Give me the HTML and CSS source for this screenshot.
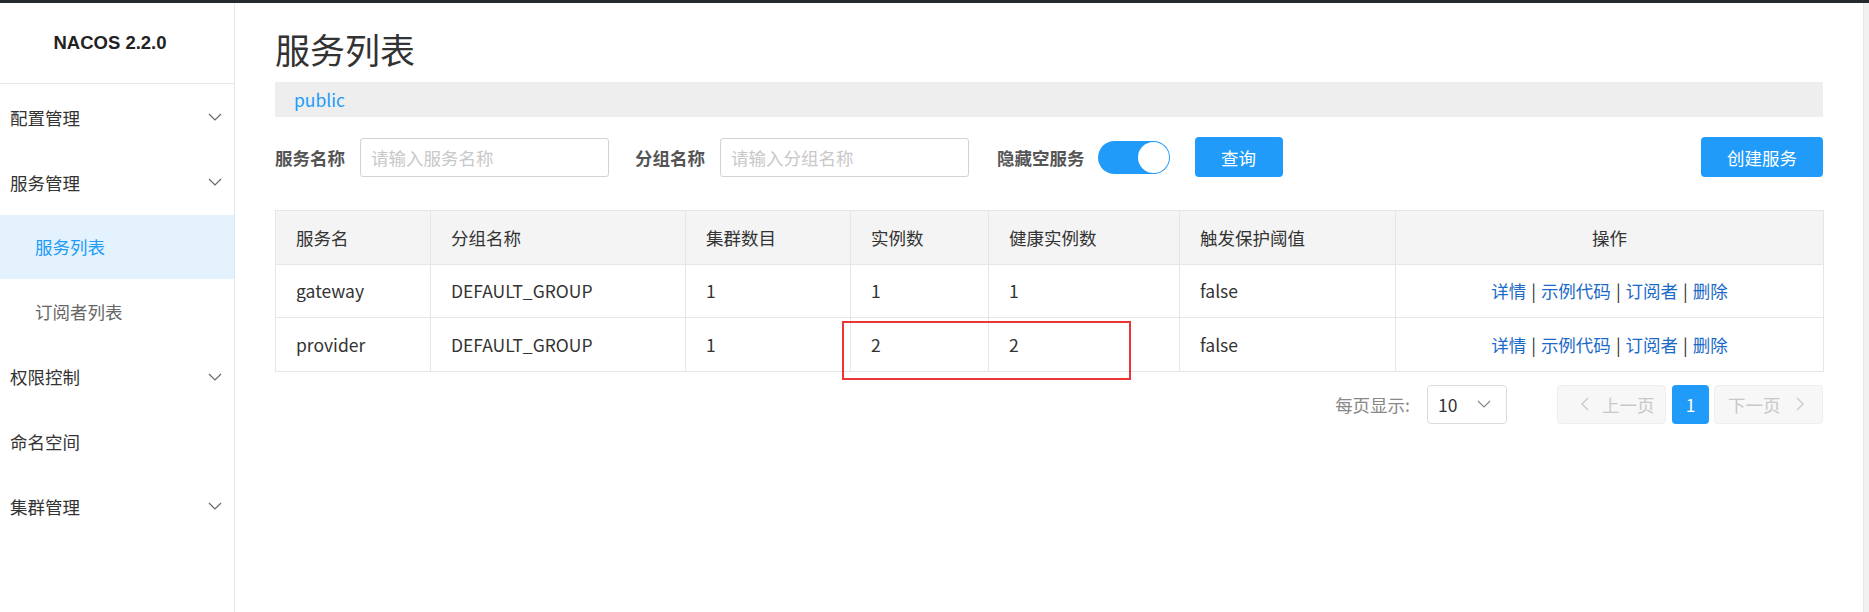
FILE: index.html
```html
<!DOCTYPE html>
<html lang="zh-CN">
<head>
<meta charset="utf-8">
<title>服务列表 - NACOS</title>
<link rel="stylesheet" href="styles.css">
</head>
<body>
<div class="topbar"></div>
<div class="app">
  <aside class="sidebar">
    <div class="logo">NACOS 2.2.0</div>
    <ul class="menu">
      <li class="menu-item"><span>配置管理</span><svg class="chev" viewBox="0 0 14 8"><path d="M1 1 L7 7 L13 1"/></svg></li>
      <li class="menu-item"><span>服务管理</span><svg class="chev" viewBox="0 0 14 8"><path d="M1 1 L7 7 L13 1"/></svg></li>
      <li class="menu-item sub active"><span>服务列表</span></li>
      <li class="menu-item sub"><span>订阅者列表</span></li>
      <li class="menu-item"><span>权限控制</span><svg class="chev" viewBox="0 0 14 8"><path d="M1 1 L7 7 L13 1"/></svg></li>
      <li class="menu-item"><span>命名空间</span></li>
      <li class="menu-item"><span>集群管理</span><svg class="chev" viewBox="0 0 14 8"><path d="M1 1 L7 7 L13 1"/></svg></li>
    </ul>
  </aside>
  <main class="main">
    <h1 class="title">服务列表</h1>
    <div class="ns-bar">public</div>
    <div class="filters">
      <label class="f-label">服务名称</label>
      <input class="f-input" placeholder="请输入服务名称">
      <label class="f-label gap-l">分组名称</label>
      <input class="f-input" placeholder="请输入分组名称">
      <label class="f-label gap-l2">隐藏空服务</label>
      <span class="switch"><span class="knob"></span></span>
      <button class="btn btn-query">查询</button>
      <span class="spacer"></span>
      <button class="btn btn-create">创建服务</button>
    </div>
    <div class="table-wrap">
      <table class="tbl">
        <colgroup>
          <col class="c1"><col class="c2"><col class="c3"><col class="c4"><col class="c5"><col class="c6"><col class="c7">
        </colgroup>
        <thead>
          <tr><th>服务名</th><th>分组名称</th><th>集群数目</th><th>实例数</th><th>健康实例数</th><th>触发保护阈值</th><th class="center">操作</th></tr>
        </thead>
        <tbody>
          <tr><td>gateway</td><td>DEFAULT_GROUP</td><td>1</td><td>1</td><td>1</td><td>false</td>
            <td class="center"><a>详情</a><span class="sep">|</span><a>示例代码</a><span class="sep">|</span><a>订阅者</a><span class="sep">|</span><a>删除</a></td></tr>
          <tr><td>provider</td><td>DEFAULT_GROUP</td><td>1</td><td>2</td><td>2</td><td>false</td>
            <td class="center"><a>详情</a><span class="sep">|</span><a>示例代码</a><span class="sep">|</span><a>订阅者</a><span class="sep">|</span><a>删除</a></td></tr>
        </tbody>
      </table>
      <div class="mark"></div>
    </div>
    <div class="pager">
      <span class="pg-label">每页显示:</span>
      <span class="pg-select"><span>10</span><svg class="chev2" viewBox="0 0 14 8"><path d="M1 1 L7 7 L13 1"/></svg></span>
      <span class="pg-btn prev"><svg class="arr" viewBox="0 0 8 14"><path d="M7 1 L1 7 L7 13"/></svg><span>上一页</span></span>
      <span class="pg-num">1</span>
      <span class="pg-btn next"><span>下一页</span><svg class="arr" viewBox="0 0 8 14"><path d="M1 1 L7 7 L1 13"/></svg></span>
    </div>
  </main>
  <div class="scrolltrack"></div>
</div>
</body>
</html>
```
FILE: styles.css
```css
* { box-sizing: border-box; }
html, body { margin: 0; padding: 0; }
body {
  width: 1869px;
  height: 612px;
  overflow: hidden;
  background: #fff;
  font-family: "Noto Sans CJK SC", "Noto Sans", sans-serif;
  font-size: 17.5px;
  color: #333;
}
.topbar { height: 3px; background: #252a30; }
.app { display: flex; height: 609px; }

.sidebar {
  width: 235px;
  flex: none;
  border-right: 1px solid #e6e6e6;
}
.logo {
  height: 81px;
  border-bottom: 1px solid #e8e8e8;
  display: flex;
  align-items: center;
  justify-content: center;
  padding-right: 14px;
  font-family: "Liberation Sans", Arial, sans-serif;
  font-weight: bold;
  font-size: 18.5px;
  color: #222;
}
.menu { list-style: none; margin: 0; padding: 1px 0 0 0; }
.menu-item {
  height: 64.8px;
  display: flex;
  align-items: center;
  justify-content: space-between;
  padding: 0 12px 0 10px;
  color: #333;
}
.menu-item.sub { padding-left: 35px; color: #666; }
.menu-item.active { background: #e4f2fd; color: #209bfa; }
.chev { width: 14px; height: 8px; fill: none; stroke: #666; stroke-width: 1.2; }

.main { flex: 1; padding: 23px 40px 0 40px; min-width: 0; }
.title {
  margin: 0;
  font-size: 35px;
  line-height: 46px;
  font-weight: normal;
  color: #333;
}
.ns-bar {
  margin-top: 10px;
  height: 35px;
  line-height: 35px;
  background: #eeeeee;
  padding-left: 19px;
  color: #209bfa;
}

.filters {
  margin-top: 20px;
  height: 40px;
  display: flex;
  align-items: center;
}
.f-label { font-weight: bold; color: #555; margin-right: 15px; white-space: nowrap; }
.f-label.gap-l { margin-left: 26px; }
.f-label.gap-l2 { margin-left: 28px; margin-right: 13px; }
.f-input {
  width: 249px;
  height: 39px;
  border: 1px solid #d3d3d3;
  border-radius: 3px;
  padding: 0 10px;
  font-family: inherit;
  font-size: 17.5px;
  color: #333;
  outline: none;
}
.f-input::placeholder { color: #c8c8c8; }
.switch {
  width: 72px;
  height: 33px;
  border-radius: 17px;
  background: #209bfa;
  display: flex;
  align-items: center;
  justify-content: flex-end;
  padding-right: 1px;
}
.knob { width: 31px; height: 31px; border-radius: 50%; background: #fff; }
.btn {
  height: 40px;
  border: none;
  border-radius: 4px;
  background: #209bfa;
  color: #fff;
  font-family: inherit;
  font-size: 17.5px;
  padding: 0;
}
.btn-query { width: 88px; margin-left: 25px; }
.spacer { flex: 1; }
.btn-create { width: 122px; }

.table-wrap { position: relative; margin-top: 33px; }
.tbl {
  width: 100%;
  border-collapse: collapse;
  table-layout: fixed;
}
.c1 { width: 155px; } .c2 { width: 255px; } .c3 { width: 165px; }
.c4 { width: 138px; } .c5 { width: 191px; } .c6 { width: 216px; } .c7 { width: 428px; }
.tbl th, .tbl td {
  border: 1px solid #e6e6e6;
  height: 53.5px;
  padding: 0 20px;
  text-align: left;
  font-weight: normal;
  color: #333;
  white-space: nowrap;
}
.tbl th { background: #f4f4f4; }
.tbl .center { text-align: center; }
.tbl a { color: #1c6ac8; }
.sep { color: #333; margin: 0 5px; }
.mark {
  position: absolute;
  left: 567px;
  top: 111px;
  width: 289px;
  height: 59px;
  border: 2px solid #ee3535;
}

.pager {
  margin-top: 13px;
  height: 39px;
  display: flex;
  align-items: center;
  justify-content: flex-end;
}
.pg-label { color: #888; margin-right: 17px; }
.pg-select {
  width: 80px;
  height: 39px;
  border: 1px solid #dcdcdc;
  border-radius: 4px;
  display: flex;
  align-items: center;
  justify-content: space-between;
  padding: 0 15px 0 10px;
  color: #333;
  margin-right: 50px;
}
.chev2 { width: 14px; height: 8px; fill: none; stroke: #888; stroke-width: 1.2; }
.pg-btn {
  width: 109px;
  height: 39px;
  border: 1px solid #eeeeee;
  border-radius: 4px;
  background: #f7f7f7;
  color: #c8c8c8;
  display: flex;
  align-items: center;
}
.pg-btn.prev { padding-left: 23px; gap: 13px; }
.pg-btn.next { padding-left: 13px; gap: 15px; }
.arr { width: 8px; height: 14px; fill: none; stroke: #c8c8c8; stroke-width: 1.3; }
.pg-num {
  width: 37px;
  height: 39px;
  margin: 0 5px 0 6px;
  border-radius: 4px;
  background: #209bfa;
  color: #fff;
  display: flex;
  align-items: center;
  justify-content: center;
}
.scrolltrack {
  width: 6px;
  flex: none;
  background: #f1f1f1;
  border-left: 1px solid #e6e6e6;
}
```
